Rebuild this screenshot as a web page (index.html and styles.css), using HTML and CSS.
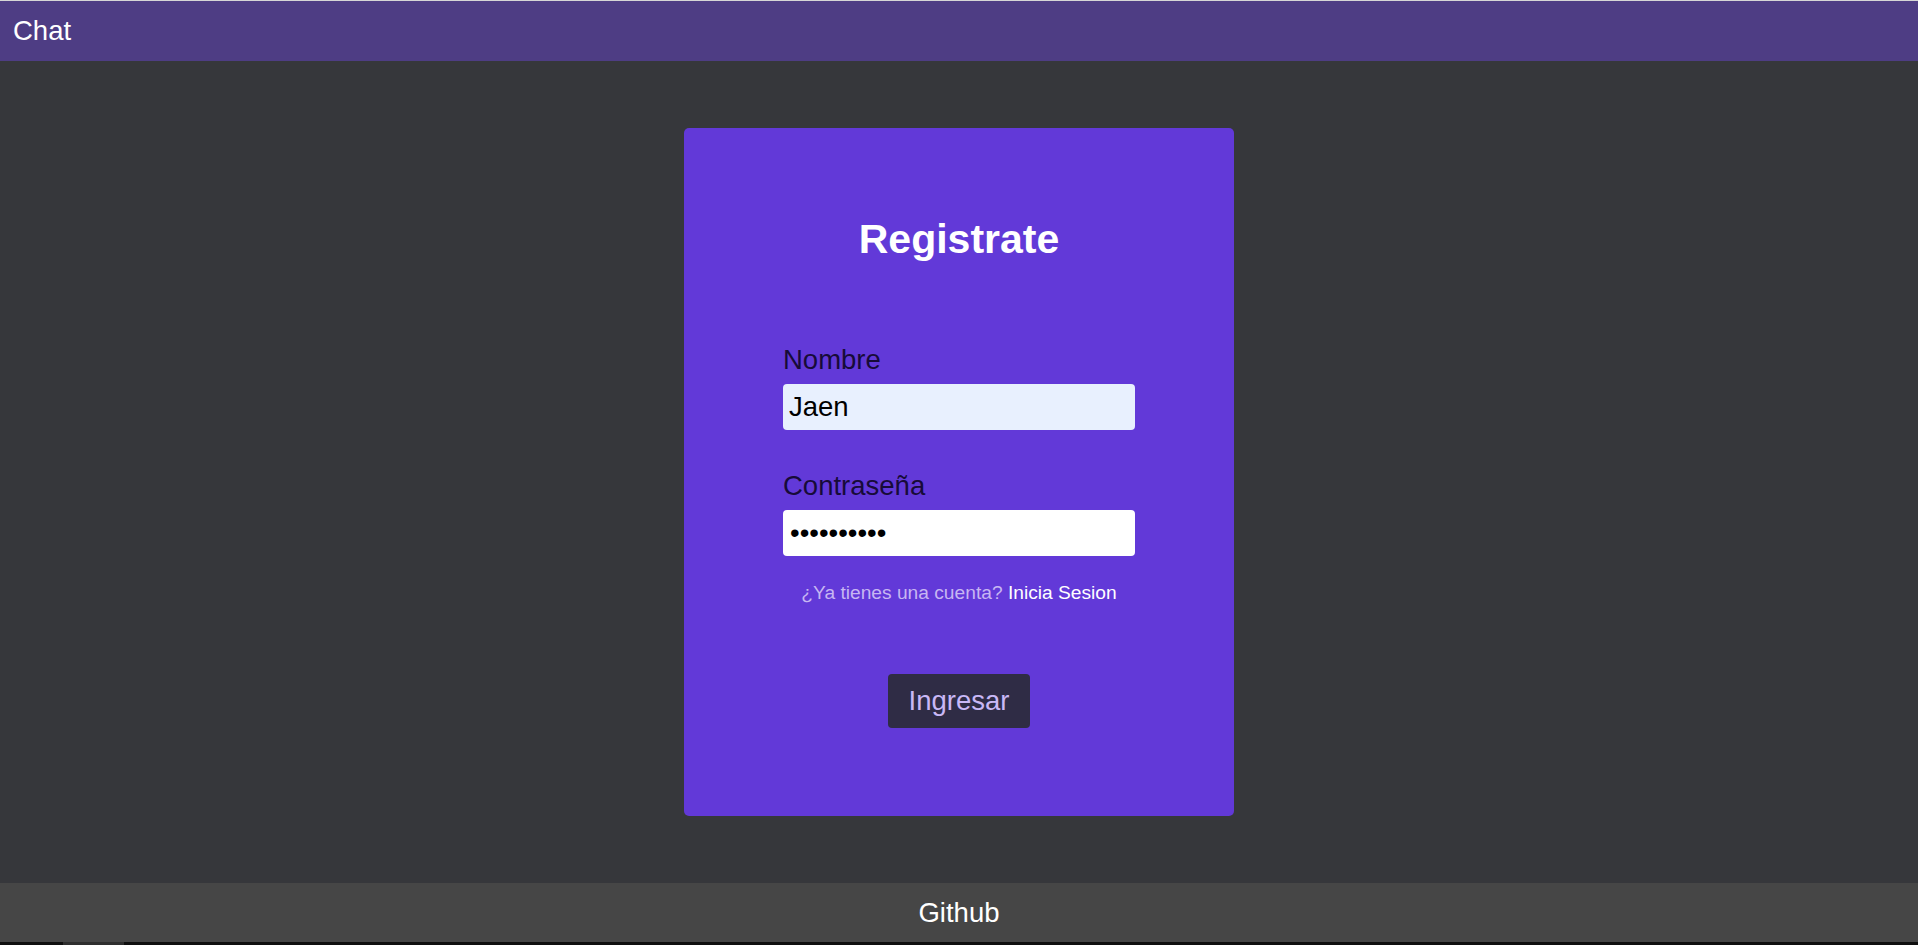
FILE: index.html
```html
<!DOCTYPE html>
<html lang="es">
<head>
<meta charset="utf-8">
<title>Chat</title>
<link rel="stylesheet" href="styles.css">
</head>
<body>
<div class="page">
  <div class="topline"></div>
  <header class="header">
    <span class="brand">Chat</span>
  </header>
  <main class="main">
    <div class="card">
      <h1 class="title">Registrate</h1>
      <form class="form">
        <div class="field">
          <label class="label" for="nombre">Nombre</label>
          <input class="input input-filled" id="nombre" type="text" value="Jaen">
        </div>
        <div class="field field-second">
          <label class="label" for="pass">Contraseña</label>
          <input class="input input-pass" id="pass" type="password" value="abcdefghij">
        </div>
        <p class="alt">¿Ya tienes una cuenta? <a class="alt-link" href="#">Inicia Sesion</a></p>
        <button class="btn" type="button">Ingresar</button>
      </form>
    </div>
  </main>
  <footer class="footer">
    <span class="footer-text">Github</span>
  </footer>
  <div class="scrollbar"><div class="thumb"></div></div>
</div>
</body>
</html>
```

FILE: styles.css
```css
* { box-sizing: border-box; }
html, body { margin: 0; padding: 0; }
body {
  font-family: "Liberation Sans", Arial, sans-serif;
  background: #36373b;
  overflow: hidden;
}
.page {
  display: flex;
  flex-direction: column;
  height: 945px;
}
.topline {
  height: 1px;
  background: #d6d6d6;
}
.header {
  height: 60px;
  background: #4e3d84;
  display: flex;
  align-items: center;
  padding-left: 13px;
}
.brand {
  color: #ffffff;
  font-size: 27.5px;
  line-height: 32px;
}
.main {
  flex: 1;
  display: flex;
  justify-content: center;
  align-items: flex-start;
  padding-top: 67px;
}
.card {
  width: 550px;
  background: #6239d8;
  border-radius: 5px;
  padding: 87px 0 88px;
  display: flex;
  flex-direction: column;
  align-items: center;
}
.title {
  margin: 0;
  color: #ffffff;
  font-size: 41px;
  line-height: 48px;
  font-weight: 700;
}
.form {
  width: 352px;
  margin: 81px 0 0;
  display: flex;
  flex-direction: column;
  align-items: center;
}
.field {
  width: 100%;
  display: flex;
  flex-direction: column;
}
.field-second { margin-top: 40px; }
.label {
  color: #170b38;
  font-size: 27.5px;
  line-height: 32px;
  margin-bottom: 8px;
}
.input {
  width: 100%;
  height: 46px;
  border: none;
  border-radius: 4px;
  background: #ffffff;
  color: #000000;
  font-family: "Liberation Sans", Arial, sans-serif;
  font-size: 27.5px;
  padding: 0 6px;
  outline: none;
}
.input-pass { padding-left: 7px; }
.input-filled { background: #e8f0fe; }
.alt {
  margin: 26px 0 0;
  color: #c7b6f2;
  font-size: 19.2px;
  line-height: 22px;
  text-align: center;
}
.alt-link {
  color: #ffffff;
  text-decoration: none;
}
.btn {
  margin-top: 70px;
  width: 142px;
  height: 54px;
  border: none;
  border-radius: 4px;
  background: #2f2c45;
  color: #c9b8f6;
  font-family: "Liberation Sans", Arial, sans-serif;
  font-size: 27.5px;
  padding: 0;
}
.footer {
  height: 59px;
  background: #464646;
  display: flex;
  align-items: center;
  justify-content: center;
}
.footer-text {
  color: #ffffff;
  font-size: 27.5px;
  line-height: 32px;
}
.scrollbar {
  height: 3px;
  background: #0f0f0f;
  display: flex;
}
.thumb {
  margin-left: 63px;
  width: 61px;
  background: #2e2e2e;
}
```
